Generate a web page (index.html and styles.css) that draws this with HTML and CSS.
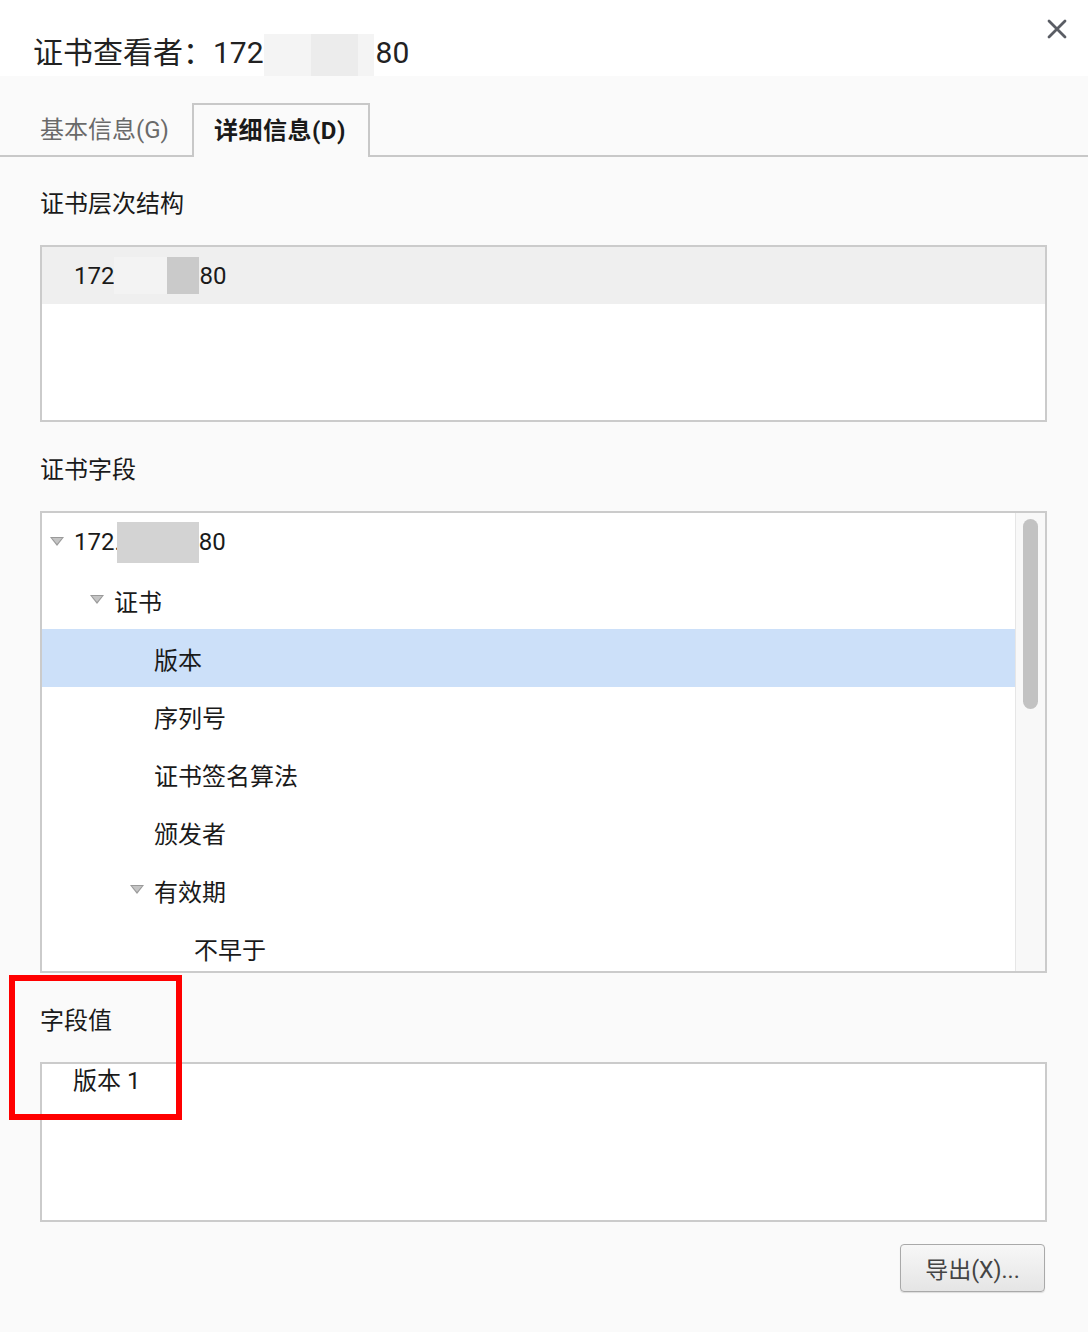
FILE: index.html
```html
<!DOCTYPE html>
<html lang="zh-CN">
<head>
<meta charset="utf-8">
<title>证书查看者</title>
<link rel="stylesheet" href="styles.css">
</head>
<body>
<div class="dialog">
  <header class="header">
    <div class="title">
      <span class="title-text">证书查看者：172</span>
      <span class="blur blur-a"></span><span class="blur blur-b"></span><span class="blur blur-a short"></span>
      <span class="title-text">80</span>
    </div>
    <button class="close" aria-label="关闭">
      <svg width="20" height="20" viewBox="0 0 20 20"><path d="M2 2 L18 18 M18 2 L2 18" stroke="#5a5d64" stroke-width="2.8" stroke-linecap="round" fill="none"/></svg>
    </button>
  </header>

  <nav class="tabs">
    <div class="tab">基本信息(G)</div>
    <div class="tab active">详细信息(D)</div>
  </nav>

  <main class="content">
    <div class="label first">证书层次结构</div>
    <div class="box hierarchy">
      <div class="hier-row">
        <span>172</span><span class="mask mask-light"></span><span class="mask mask-dark"></span><span>80</span>
      </div>
    </div>

    <div class="label">证书字段</div>
    <div class="box fields">
      <div class="tree">
        <div class="row lv0"><span class="twisty open"></span><span>172.</span><span class="mask mask-tree"></span><span>80</span></div>
        <div class="row lv1"><span class="twisty open"></span><span>证书</span></div>
        <div class="row lv2 selected"><span class="twisty"></span><span>版本</span></div>
        <div class="row lv2"><span class="twisty"></span><span>序列号</span></div>
        <div class="row lv2"><span class="twisty"></span><span>证书签名算法</span></div>
        <div class="row lv2"><span class="twisty"></span><span>颁发者</span></div>
        <div class="row lv2"><span class="twisty open"></span><span>有效期</span></div>
        <div class="row lv3"><span class="twisty"></span><span>不早于</span></div>
      </div>
      <div class="scrollbar"><div class="thumb"></div></div>
    </div>

    <div class="label">字段值</div>
    <div class="box value">
      <div class="value-text">版本 1</div>
    </div>

    <div class="actions">
      <button class="btn">导出(X)...</button>
    </div>

    <div class="highlight"></div>
  </main>
</div>
</body>
</html>
```

FILE: styles.css
```css
* { box-sizing: border-box; }
html, body {
  margin: 0;
  padding: 0;
  background: #fafafa;
}
body {
  font-family: Roboto, "Noto Sans CJK SC", sans-serif;
  color: #1a1a1a;
  width: 1088px;
  height: 1332px;
  overflow: hidden;
}
.dialog {
  position: relative;
  width: 1088px;
  min-height: 1332px;
  background: #fafafa;
}
.header {
  height: 76px;
  background: #ffffff;
  display: flex;
  justify-content: space-between;
  align-items: flex-start;
  padding: 0 21px 0 33px;
}
.title {
  display: flex;
  align-items: flex-start;
}
.title-text {
  font-size: 30px;
  line-height: 40px;
  margin-top: 33px;
  color: #222;
}
.blur {
  display: inline-block;
  height: 42px;
  margin-top: 34px;
}
.blur-a { width: 47px; background: #f4f4f4; }
.blur-b { width: 47px; background: #ececec; }
.blur-a.short { width: 16px; margin-right: 2px; }
.close {
  margin-top: 19px;
  padding: 0;
  border: 0;
  background: transparent;
  width: 20px;
  height: 20px;
  display: flex;
}
.tabs {
  height: 81px;
  display: flex;
  align-items: flex-end;
  padding-left: 28px;
  border-bottom: 2px solid #c8c8c8;
}
.tab {
  font-size: 24px;
  line-height: 54px;
  height: 52px;
  padding: 0 12px;
  color: #6a6a6a;
}
.tab.active {
  margin-left: 11px;
  padding: 0 22px 0 20px;
  color: #1a1a1a;
  font-weight: 700;
  letter-spacing: 0.5px;
  border: 2px solid #c8c8c8;
  border-bottom: 0;
  background: #fafafa;
  height: 54px;
  line-height: 52px;
  margin-bottom: -2px;
}
.content {
  padding: 0 41px 0 40px;
  display: flex;
  flex-direction: column;
}
.label {
  font-size: 24px;
  line-height: 34px;
  margin-top: 31px;
  margin-bottom: 24px;
  color: #1a1a1a;
}
.label.first { margin-top: 30px; }
.box {
  border: 2px solid #cbcbcb;
  background: #ffffff;
}
.hierarchy { height: 177px; }
.hier-row {
  height: 57px;
  background: #efefef;
  display: flex;
  align-items: center;
  padding-left: 32px;
  font-size: 24px;
}
.mask { display: inline-block; height: 37px; }
.mask-light { width: 53px; background: #f3f3f3; margin-left: 0; }
.mask-dark { width: 32px; background: #cacaca; }

.fields {
  height: 462px;
  display: flex;
  overflow: hidden;
}
.tree {
  flex: 1;
  overflow: hidden;
}
.row {
  height: 58px;
  display: flex;
  align-items: center;
  font-size: 24px;
  color: #1a1a1a;
}
.row.selected { background: #cce0f9; }
.lv0 { padding-left: 8px; }
.lv1 { padding-left: 48px; }
.lv2 { padding-left: 88px; }
.lv3 { padding-left: 128px; }
.twisty {
  width: 24px;
  height: 10px;
  flex: none;
  position: relative;
}
.twisty.open::before {
  content: "";
  position: absolute;
  left: 0;
  top: 0;
  width: 0;
  height: 0;
  border-left: 7px solid transparent;
  border-right: 7px solid transparent;
  border-top: 9px solid #9a9a9a;
}
.twisty.open::after {
  content: "";
  position: absolute;
  left: 2px;
  top: 1px;
  width: 0;
  height: 0;
  border-left: 5px solid transparent;
  border-right: 5px solid transparent;
  border-top: 6px solid #c4c4c4;
}
.mask-tree {
  width: 82px;
  height: 41px;
  background: #d3d3d3;
  margin-left: -4px;
}
.scrollbar {
  width: 30px;
  flex: none;
  background: #f8f8f8;
  border-left: 1px solid #e6e6e6;
  padding: 6px 0 0 7px;
}
.thumb {
  width: 15px;
  height: 190px;
  border-radius: 8px;
  background: #c2c2c2;
}
.value { height: 160px; }
.value-text {
  font-size: 24px;
  line-height: 34px;
  padding-left: 31px;
}
.actions {
  display: flex;
  justify-content: flex-end;
  margin-top: 22px;
  padding-right: 2px;
}
.btn {
  width: 145px;
  height: 48px;
  border: 1px solid #a9a9a9;
  border-radius: 4px;
  background: linear-gradient(#f7f7f7, #e5e5e5);
  font-family: Roboto, "Noto Sans CJK SC", sans-serif;
  font-size: 23px;
  color: #444;
  padding: 0;
  box-shadow: 0 1px 1px rgba(0,0,0,0.12);
}
.highlight {
  position: absolute;
  left: 9px;
  top: 975px;
  width: 173px;
  height: 145px;
  border: 6px solid #ff0000;
  pointer-events: none;
}
```
